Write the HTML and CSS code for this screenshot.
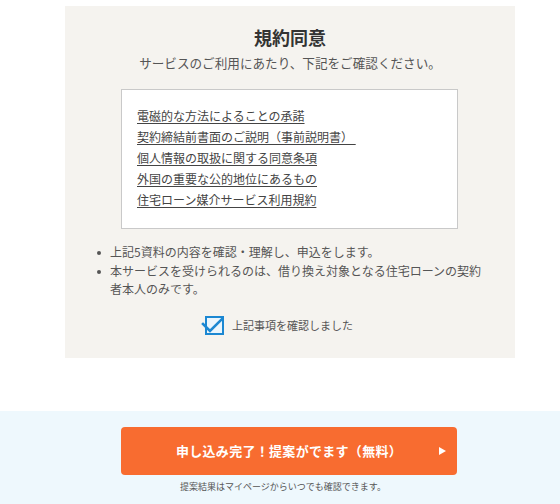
FILE: index.html
```html
<!DOCTYPE html>
<html lang="ja">
<head>
<meta charset="utf-8">
<link rel="stylesheet" href="styles.css">
</head>
<body>
<section class="panel">
  <h1 class="title">規約同意</h1>
  <p class="lead">サービスのご利用にあたり、下記をご確認ください。</p>
  <div class="docs">
    <a class="doc" href="#">電磁的な方法によることの承諾</a>
    <a class="doc" href="#">契約締結前書面のご説明（事前説明書）&nbsp;</a>
    <a class="doc" href="#">個人情報の取扱に関する同意条項</a>
    <a class="doc" href="#">外国の重要な公的地位にあるもの</a>
    <a class="doc" href="#">住宅ローン媒介サービス利用規約</a>
  </div>
  <ul class="notes">
    <li>上記5資料の内容を確認・理解し、申込をします。</li>
    <li>本サービスを受けられるのは、借り換え対象となる住宅ローンの契約者本人のみです。</li>
  </ul>
  <label class="agree">
    <span class="box">
      <svg width="26" height="20" viewBox="0 0 26 20"><path d="M2 8 L9 15 L21 3" fill="none" stroke="#1b87d2" stroke-width="2.6" stroke-linecap="square"/></svg>
    </span>
    <span class="agree-text">上記事項を確認しました</span>
  </label>
</section>
<footer class="cta">
  <button class="submit" type="button">
    <span class="submit-text">申し込み完了！提案がでます（無料）</span>
    <span class="arrow"></span>
  </button>
  <p class="note">提案結果はマイページからいつでも確認できます。</p>
</footer>
</body>
</html>
```

FILE: styles.css
```css
* { box-sizing: border-box; }
html, body { margin: 0; padding: 0; }
body {
  width: 560px;
  height: 504px;
  overflow: hidden;
  background: #fff;
  font-family: "Noto Sans CJK JP", "Noto Sans", sans-serif;
  color: #555;
}
.panel {
  width: 450px;
  margin: 6px 0 0 65px;
  background: #f5f3ef;
  padding: 18px 0 23px;
  display: flex;
  flex-direction: column;
}
.title {
  margin: 0;
  font-size: 18px;
  line-height: 26px;
  font-weight: 700;
  color: #333;
  text-align: center;
}
.lead {
  margin: 3px 0 0;
  font-size: 12.6px;
  line-height: 20px;
  text-align: center;
  color: #555;
}
.docs {
  margin: 16px 0 0 56px;
  width: 337px;
  background: #fff;
  border: 1px solid #c9c9c9;
  padding: 15px 15px 18px;
  display: flex;
  flex-direction: column;
  align-items: flex-start;
}
.doc {
  font-size: 12px;
  line-height: 21px;
  color: #444;
  text-decoration: underline;
  text-underline-offset: 2px;
}
.notes {
  list-style: none;
  margin: 14px 0 0;
  padding: 0 32px 0 45px;
}
.notes li {
  position: relative;
  font-size: 12px;
  line-height: 18.5px;
  color: #555;
}
.notes li::before {
  content: "";
  position: absolute;
  left: -13px;
  top: 8px;
  width: 4px;
  height: 4px;
  border-radius: 50%;
  background: #555;
}
.agree {
  margin: 17px 0 0 140px;
  display: flex;
  align-items: center;
  gap: 8px;
  height: 19px;
}
.box {
  position: relative;
  width: 19px;
  height: 19px;
  border: 2px solid #1b87d2;
  background: #eaf5fd;
  flex: none;
}
.box svg {
  position: absolute;
  left: -6px;
  top: -2px;
}
.agree-text {
  font-size: 11px;
  line-height: 19px;
  color: #555;
}
.cta {
  margin-top: 53px;
  background: #eef8fd;
  padding: 16px 0 20px;
}
.submit {
  margin-left: 121px;
  width: 336px;
  height: 48px;
  border: 0;
  border-radius: 4px;
  background: #f86c30;
  color: #fff;
  font-family: inherit;
  font-size: 13px;
  font-weight: 700;
  display: flex;
  align-items: center;
  justify-content: center;
  position: relative;
  padding: 0;
}
.submit-text { letter-spacing: 0.3px; }
.arrow {
  position: absolute;
  right: 11px;
  top: 20px;
  width: 0;
  height: 0;
  border-left: 7px solid #fff;
  border-top: 4.5px solid transparent;
  border-bottom: 4.5px solid transparent;
}
.note {
  margin: 5px 0 0;
  padding-left: 6px;
  text-align: center;
  font-size: 9px;
  line-height: 14px;
  color: #555;
}
```
